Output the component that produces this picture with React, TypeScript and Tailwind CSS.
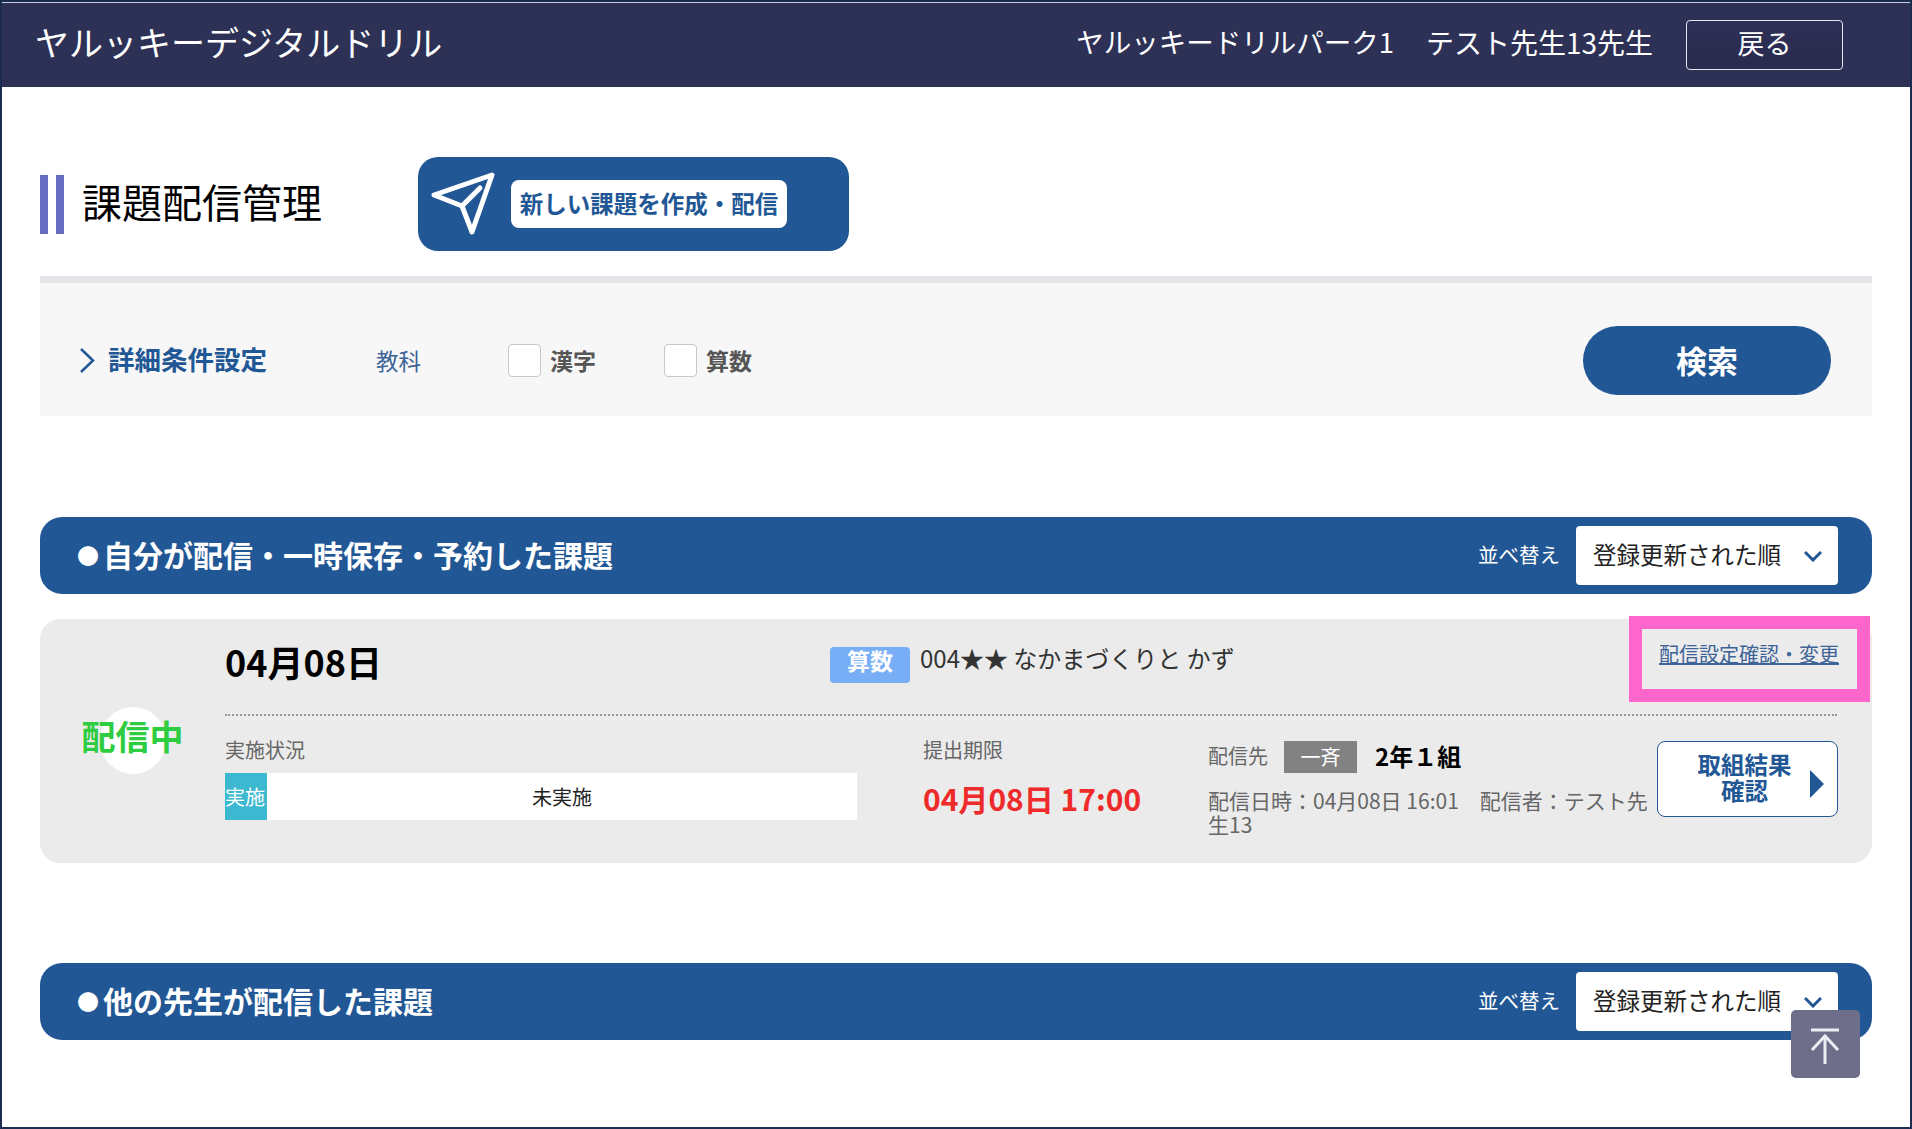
const SectionBar = ({ title, className }: { title: string; className: string }) => {
  return (
    <div className={`flex h-[77px] items-center rounded-[22px] bg-[#225795] pr-[34px] pl-[37px] text-white ${className}`}>
      <h2 className="flex items-center pb-[4px] text-[30px] leading-none font-bold whitespace-nowrap">
        <span className="mr-[4px] text-[22px]">●</span>
        {title}
      </h2>
      <span className="ml-auto pb-[2px] text-[20.5px] leading-none">並べ替え</span>
      <div className="ml-[16px] flex h-[59px] w-[262px] items-center justify-between rounded-[4px] bg-white pr-[16px] pl-[17px] text-[23.5px] leading-none text-[#222]">
        <span className="pb-[2px] whitespace-nowrap">登録更新された順</span>
        <svg width="18" height="12" viewBox="0 0 18 12" fill="none" stroke="#225795" strokeWidth="3">
          <polyline points="1,2 9,10 17,2" />
        </svg>
      </div>
    </div>
  );
};

const App = () => {
  return (
    <div className="relative h-[1129px] w-full overflow-hidden border-2 border-[#1b2c50] bg-white font-['Noto_Sans_CJK_JP','Noto_Sans',sans-serif]">
      <header className="flex h-[85px] items-center border-t border-[#c8ccd8] bg-[#2e3156] pr-[67px] pl-[33px] text-white">
        <h1 className="pb-[6px] text-[34px] leading-none whitespace-nowrap">ヤルッキーデジタルドリル</h1>
        <span className="ml-auto pb-[6px] text-[27.5px] leading-none whitespace-nowrap">ヤルッキードリルパーク1</span>
        <span className="ml-[32px] pb-[6px] text-[28px] leading-none whitespace-nowrap">テスト先生13先生</span>
        <button className="ml-[33px] h-[50px] w-[157px] rounded-[4px] border border-[#e6e6ee] bg-gradient-to-b from-[#2e3156] to-[#282b4e] pb-[6px] text-[27px] leading-none">
          戻る
        </button>
      </header>

      <main className="px-[38px]">
        <div className="mt-[70px] flex h-[94px] items-center">
          <div className="flex w-[378px] items-center">
            <div className="flex h-[59px] gap-[8px]">
              <div className="w-[8px] bg-[#676cc0]" />
              <div className="w-[8px] bg-[#676cc0]" />
            </div>
            <h1 className="ml-[18px] pb-[6px] text-[40px] leading-none whitespace-nowrap text-black">課題配信管理</h1>
          </div>
          <button className="flex h-[94px] w-[431px] items-center rounded-[20px] bg-[#225795] pl-[12px]">
            <svg width="70" height="70" viewBox="0 0 70 70" fill="none" stroke="white" strokeWidth="5" strokeLinejoin="round" strokeLinecap="round">
              <path d="M62 6 L4 26 L32 37 L42 63 Z" />
              <path d="M32 37 L50 19" />
            </svg>
            <span className="ml-[11px] flex h-[48px] w-[276px] items-center justify-center rounded-[8px] bg-white text-[23.5px] leading-none font-bold whitespace-nowrap text-[#225795]">
              新しい課題を作成・配信
            </span>
          </button>
        </div>

        <div className="mt-[25px] flex h-[140px] items-center border-t-[7px] border-[#e3e3e8] bg-[#f7f7f7] pt-[22px] pr-[41px] pl-[39px]">
          <svg width="16" height="25" viewBox="0 0 16 25" fill="none" stroke="#225795" strokeWidth="2.5">
            <polyline points="2,1 14,12.5 2,24" />
          </svg>
          <span className="ml-[13px] w-[268px] pb-[2px] text-[26.5px] leading-none font-bold whitespace-nowrap text-[#225795]">詳細条件設定</span>
          <span className="w-[132px] text-[22.5px] leading-none text-[#3d6397]">教科</span>
          <div className="h-[33px] w-[33px] rounded-[4px] border border-[#c8c8c8] bg-white" />
          <span className="ml-[9px] w-[114px] text-[23px] leading-none font-bold text-[#555]">漢字</span>
          <div className="h-[33px] w-[33px] rounded-[4px] border border-[#c8c8c8] bg-white" />
          <span className="ml-[9px] text-[23px] leading-none font-bold text-[#555]">算数</span>
          <button className="ml-auto h-[69px] w-[248px] rounded-full bg-[#225795] pb-[2px] text-[31px] leading-none font-bold text-white">検索</button>
        </div>

        <SectionBar title="自分が配信・一時保存・予約した課題" className="mt-[101px]" />

        <section className="mt-[25px] flex h-[244px] rounded-[20px] bg-[#ebebeb] pr-[35px]">
          <div className="flex w-[185px] shrink-0 justify-center pt-[88px]">
            <div className="flex h-[67px] w-[66px] items-center justify-center rounded-full bg-white">
              <span className="pb-[10px] text-[34px] leading-none font-bold whitespace-nowrap text-[#2ecc40]">配信中</span>
            </div>
          </div>
          <div className="min-w-0 flex-1">
            <div className="flex h-[97px] items-center border-b-2 border-dotted border-[#999]">
              <span className="w-[605px] pb-[12px] text-[36px] leading-none font-bold text-black">04月08日</span>
              <div className="mb-[4px] flex h-[36px] w-[80px] items-center justify-center rounded-[4px] bg-[#78aef5] pb-[8px] text-[23px] leading-none font-bold text-white">算数</div>
              <span className="mb-[18px] ml-[10px] text-[24px] leading-none whitespace-nowrap text-[#333]">004★★ なかまづくりと かず</span>
              <a className="mr-[-2px] mb-[26px] ml-auto text-[20px] leading-none whitespace-nowrap text-[#3d6397] underline">配信設定確認・変更</a>
            </div>
            <div className="flex">
              <div className="w-[632px] shrink-0 pt-[24px]">
                <p className="text-[20px] leading-none text-[#666]">実施状況</p>
                <div className="mt-[13px] flex h-[47px] bg-white">
                  <div className="flex w-[42px] items-center overflow-hidden bg-[#3cb8d0] text-[20px] whitespace-nowrap text-white">実施</div>
                  <div className="flex flex-1 items-center justify-center text-[20px] text-[#222]">未実施</div>
                </div>
              </div>
              <div className="ml-[66px] w-[285px] shrink-0 pt-[24px]">
                <p className="text-[20px] leading-none text-[#666]">提出期限</p>
                <p className="mt-[23px] text-[30px] leading-none font-bold whitespace-nowrap text-[#ee2a2a]">04月08日 17:00</p>
              </div>
              <div className="w-[440px] shrink-0 pt-[25px]">
                <div className="flex items-center">
                  <span className="pb-[2px] text-[20px] leading-none text-[#666]">配信先</span>
                  <span className="ml-[16px] flex h-[32px] w-[73px] items-center justify-center bg-[#828282] text-[20px] leading-none text-white">一斉</span>
                  <span className="ml-[18px] pb-[2px] text-[24px] leading-none font-bold whitespace-nowrap text-black">2年１組</span>
                </div>
                <p className="mt-[15px] text-[21px] leading-[24px] text-[#666]">配信日時：04月08日 16:01　配信者：テスト先生13</p>
              </div>
              <button className="relative mt-[25px] ml-[9px] h-[76px] w-[181px] shrink-0 rounded-[8px] border border-[#225795] bg-white pr-[6px] pb-[4px] text-[23.5px] leading-[26px] font-bold text-[#225795]">
                取組結果
                <br />
                確認
                <svg className="absolute top-[28px] right-[13px]" width="14" height="28" viewBox="0 0 14 28" fill="#225795">
                  <polygon points="0,0 14,14 0,28" />
                </svg>
              </button>
            </div>
          </div>
        </section>

        <SectionBar title="他の先生が配信した課題" className="mt-[100px]" />
      </main>

      {/* pink annotation over the card */}
      <div className="absolute top-[614px] left-[1627px] h-[86px] w-[241px] border-[13px] border-[#ff66cc]" />

      <button className="absolute top-[1008px] left-[1789px] h-[68px] w-[69px] rounded-[5px] bg-[#6e6e8a]">
        <svg width="69" height="68" viewBox="0 0 69 68" fill="none" stroke="#ececf2" strokeWidth="3">
          <path d="M20 20 H48" />
          <path d="M21 40 L34 26 L47 40" />
          <path d="M34 26 V54" />
        </svg>
      </button>
    </div>
  );
};

export default App;
